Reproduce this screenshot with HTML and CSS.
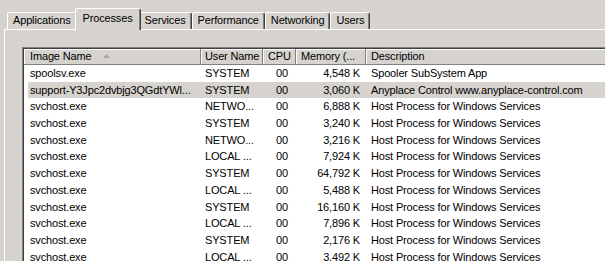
FILE: index.html
```html
<!DOCTYPE html>
<html lang="en">
<head>
  <meta charset="UTF-8" />
  <meta name="viewport" content="width=device-width, initial-scale=1.0" />
  <title>Windows Task Manager</title>
  <link rel="stylesheet" href="styles.css">
</head>
<body>
  <div class="tabs">
    <div class="tab">Applications</div>
    <div class="tab active">Processes</div>
    <div class="tab">Services</div>
    <div class="tab">Performance</div>
    <div class="tab">Networking</div>
    <div class="tab">Users</div>
  </div>

  <div class="panel">
    <div class="list">
      <div class="list-inner">
        <div class="header">
          <div class="head">Image Name <svg class="sort" width="7" height="4" viewBox="0 0 7 4"><path d="M3.5 0 7 4H0z" fill="#aca899"/></svg></div>
          <div class="head user">User Name</div>
          <div class="head">CPU</div>
          <div class="head">Memory (...</div>
          <div class="head">Description</div>
        </div>

        <div class="row"><span>spoolsv.exe</span><span>SYSTEM</span><span class="num">00</span><span class="num">4,548 K</span><span>Spooler SubSystem App</span></div>
        <div class="row selected"><span>support-Y3Jpc2dvbjg3QGdtYWl...</span><span>SYSTEM</span><span class="num">00</span><span class="num">3,060 K</span><span>Anyplace Control www.anyplace-control.com</span></div>
        <div class="row"><span>svchost.exe</span><span>NETWO...</span><span class="num">00</span><span class="num">6,888 K</span><span>Host Process for Windows Services</span></div>
        <div class="row"><span>svchost.exe</span><span>SYSTEM</span><span class="num">00</span><span class="num">3,240 K</span><span>Host Process for Windows Services</span></div>
        <div class="row"><span>svchost.exe</span><span>NETWO...</span><span class="num">00</span><span class="num">3,216 K</span><span>Host Process for Windows Services</span></div>
        <div class="row"><span>svchost.exe</span><span>LOCAL ...</span><span class="num">00</span><span class="num">7,924 K</span><span>Host Process for Windows Services</span></div>
        <div class="row"><span>svchost.exe</span><span>SYSTEM</span><span class="num">00</span><span class="num">64,792 K</span><span>Host Process for Windows Services</span></div>
        <div class="row"><span>svchost.exe</span><span>LOCAL ...</span><span class="num">00</span><span class="num">5,488 K</span><span>Host Process for Windows Services</span></div>
        <div class="row"><span>svchost.exe</span><span>SYSTEM</span><span class="num">00</span><span class="num">16,160 K</span><span>Host Process for Windows Services</span></div>
        <div class="row"><span>svchost.exe</span><span>LOCAL ...</span><span class="num">00</span><span class="num">7,896 K</span><span>Host Process for Windows Services</span></div>
        <div class="row"><span>svchost.exe</span><span>SYSTEM</span><span class="num">00</span><span class="num">2,176 K</span><span>Host Process for Windows Services</span></div>
        <div class="row"><span>svchost.exe</span><span>LOCAL ...</span><span class="num">00</span><span class="num">3,492 K</span><span>Host Process for Windows Services</span></div>
      </div>
    </div>
  </div>
</body>
</html>
```

FILE: styles.css
```css
body {
  margin: 0;
  height: 261px;
  overflow: hidden;
  background-color: #d6d3ce;
  color: #000;
  font-family: "Liberation Sans", Arial, sans-serif;
  font-size: 11px;
  letter-spacing: -0.15px;
}
.tabs {
  display: flex;
  align-items: flex-end;
  height: 29px;
  padding-left: 7px;
}
.tab {
  height: 16px;
  line-height: 15px;
  padding: 0 5px;
  border-top: 1px solid #fff;
  border-left: 1px solid #fff;
  border-right: 1px solid #404040;
  box-shadow: inset -1px 0 #808080;
  border-radius: 3px 3px 0 0;
  white-space: nowrap;
}
.tab.active {
  position: relative;
  z-index: 1;
  height: 21px;
  line-height: 18px;
  margin: 0 -2px -1px;
  padding: 0 7px;
  background-color: #d6d3ce;
}
.panel {
  margin-left: 4px;
  padding: 17px 0 0 17px;
  height: 260px;
  border-top: 1px solid #fff;
  border-left: 1px solid #fff;
}
.list {
  width: 700px;
  height: 260px;
  border-top: 1px solid #808080;
  border-left: 1px solid #808080;
}
.list-inner {
  height: 100%;
  background-color: #fff;
  border-top: 1px solid #404040;
  border-left: 1px solid #404040;
}
.header {
  display: grid;
  grid-template-columns: 177px 62px 33px 70px 1fr;
  height: 15px;
  line-height: 15px;
  background-color: #d6d3ce;
  border-bottom: 1px solid #808080;
}
.head {
  padding-left: 5px;
  border-right: 1px solid #808080;
  box-shadow: inset 1px 1px #fff;
  white-space: nowrap;
  overflow: hidden;
}
.head:first-child {
  padding-left: 6px;
}
.head.user {
  padding-left: 4px;
}
.sort {
  margin-left: 9px;
  vertical-align: 2px;
}
.row {
  display: grid;
  grid-template-columns: 173px 62px 33px 70px 1fr;
  margin-left: 4px;
  height: 16.7px;
  line-height: 17px;
  white-space: nowrap;
}
.row span {
  padding-left: 4px;
  overflow: hidden;
}
.row span:first-child {
  padding-left: 2px;
}
.row .num {
  text-align: right;
  padding-right: 8px;
}
.row .num + .num {
  padding-right: 6px;
}
.row span:last-child {
  padding-left: 5px;
}
.selected {
  background-color: #d6d3ce;
}
```
